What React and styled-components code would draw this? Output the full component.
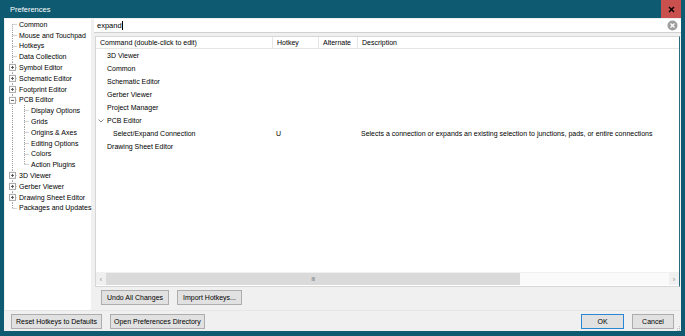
import React from 'react';
import styled, { createGlobalStyle } from 'styled-components';

const GlobalStyle = createGlobalStyle`
  html, body {
    margin: 0;
    padding: 0;
    background: #0e5a70;
  }
  body {
    font-family: 'Liberation Sans', Arial, sans-serif;
    font-size: 7px;
    color: #000;
  }
`;

const Window = styled.div`
  width: 685px;
  height: 336px;
  background: #0e5a70;
  display: flex;
  flex-direction: column;
  overflow: hidden;
`;

const TitleBar = styled.div`
  height: 18px;
  display: flex;
  align-items: center;
  padding-left: 10px;
  padding-right: 4px;
`;

const Title = styled.div`
  flex: 1;
  color: #fff;
  font-size: 7.5px;
`;

const CloseButton = styled.div`
  width: 20px;
  height: 18px;
  background: #c9504c;
  display: flex;
  align-items: center;
  justify-content: center;
`;

const Body = styled.div`
  margin: 0 4px 5px 4px;
  flex: 1;
  background: #f0f0f0;
  display: flex;
  flex-direction: column;
`;

const Main = styled.div`
  height: 292px;
  display: flex;
  padding: 1px 0 0 1px;
  box-sizing: border-box;
`;

const Tree = styled.div`
  width: 86px;
  background: #fff;
  display: flex;
  flex-direction: column;
`;

const TreeRow = styled.div`
  height: 10.8px;
  display: flex;
  align-items: center;
  white-space: nowrap;
`;

const Pane = styled.div`
  flex: 1;
  margin-left: 3px;
  display: flex;
  flex-direction: column;
`;

const Search = styled.div`
  height: 14px;
  background: #fff;
  border-bottom: 1px solid #d0d0d0;
  display: flex;
  align-items: center;
  padding: 0 3px;
  box-sizing: border-box;
`;

const SearchText = styled.div`
  flex: 1;
  font-size: 7.5px;
`;

const Caret = styled.span`
  display: inline-block;
  width: 1px;
  height: 9px;
  background: #000;
  vertical-align: middle;
`;

const Table = styled.div`
  margin: 3px 1px 0 1px;
  height: 251px;
  background: #fff;
  border: 1px solid #d6d6d6;
  border-right-color: #2a6c7e;
  box-sizing: border-box;
  display: flex;
  flex-direction: column;
`;

const cols = '177px 46px 39px 1fr';

const Header = styled.div`
  display: grid;
  grid-template-columns: ${cols};
  height: 11px;
  border-bottom: 1px solid #e5e5e5;
`;

const HeaderCell = styled.div`
  padding-left: 4px;
  display: flex;
  align-items: center;
  border-right: ${(p) => (p.last ? 'none' : '1px solid #e5e5e5')};
`;

const Rows = styled.div`
  flex: 1;
`;

const Row = styled.div`
  display: grid;
  grid-template-columns: ${cols};
  height: 13px;
  align-items: center;
  white-space: nowrap;
`;

const CommandCell = styled.div`
  display: flex;
  align-items: center;
  padding-left: ${(p) => p.indent}px;
`;

const Cell = styled.div`
  padding-left: 3px;
`;

const HScroll = styled.div`
  height: 12px;
  display: flex;
  margin-bottom: 1px;
  border-top: 1px solid #f0f0f0;
`;

const Arrow = styled.div`
  width: 10px;
  display: flex;
  align-items: center;
  justify-content: center;
  color: #8a8a8a;
  font-size: 7px;
  background: #f0f0f0;
`;

const Thumb = styled.div`
  width: 414px;
  background: #dadada;
  display: flex;
  align-items: center;
  justify-content: center;
  color: #7a7a7a;
  font-size: 6px;
  letter-spacing: -0.5px;
`;

const Track = styled.div`
  flex: 1;
  background: #fafafa;
`;

const PaneButtons = styled.div`
  display: flex;
  gap: 8px;
  padding: 3px 0 0 7px;
`;

const Button = styled.div`
  height: 15px;
  padding: 0 ${(p) => p.pad || 5}px;
  min-width: ${(p) => p.min || 0}px;
  box-sizing: border-box;
  background: #e1e1e1;
  border: 1px solid ${(p) => (p.focused ? '#2b86d6' : '#adadad')};
  display: flex;
  align-items: center;
  justify-content: center;
  white-space: nowrap;
`;

const Footer = styled.div`
  flex: 1;
  border-top: 1px solid #e6e6e6;
  display: flex;
  align-items: center;
  padding: 0 7px;
  gap: 8px;
  position: relative;
`;

const Spacer = styled.div`
  flex: 1;
`;

const Grip = styled.svg`
  position: absolute;
  right: 0;
  bottom: 0;
`;

const treeItems = [
  { label: 'Common' },
  { label: 'Mouse and Touchpad' },
  { label: 'Hotkeys' },
  { label: 'Data Collection' },
  { label: 'Symbol Editor', box: '+' },
  { label: 'Schematic Editor', box: '+' },
  { label: 'Footprint Editor', box: '+' },
  { label: 'PCB Editor', box: '-' },
  { label: 'Display Options', child: true },
  { label: 'Grids', child: true },
  { label: 'Origins & Axes', child: true },
  { label: 'Editing Options', child: true },
  { label: 'Colors', child: true },
  { label: 'Action Plugins', child: true, lastChild: true },
  { label: '3D Viewer', box: '+' },
  { label: 'Gerber Viewer', box: '+' },
  { label: 'Drawing Sheet Editor', box: '+' },
  { label: 'Packages and Updates', last: true },
];

const H = 10.8;
const M = H / 2;
const line = { stroke: '#a0a0a0', strokeWidth: 1, strokeDasharray: '1 1' };

const Guides = ({ item, first }) => {
  const w = item.child ? 26 : 14;
  return (
    <svg width={w} height={H} style={{ flex: 'none' }}>
      <line x1="7.5" x2="7.5" y1={first ? M : 0} y2={item.last ? M : H} {...line} />
      {item.child ? (
        <>
          <line x1="19.5" x2="19.5" y1="0" y2={item.lastChild ? M : H} {...line} />
          <line x1="19.5" x2="24" y1={M} y2={M} {...line} />
        </>
      ) : (
        <line x1="7.5" x2="12" y1={M} y2={M} {...line} />
      )}
      {item.box && (
        <>
          <rect x="4.5" y={M - 3} width="6" height="6" fill="#fff" stroke="#a8a8a8" />
          <line x1="6" x2="9" y1={M} y2={M} stroke="#555" />
          {item.box === '+' && <line x1="7.5" x2="7.5" y1={M - 1.5} y2={M + 1.5} stroke="#555" />}
        </>
      )}
    </svg>
  );
};

const commands = [
  { name: '3D Viewer' },
  { name: 'Common' },
  { name: 'Schematic Editor' },
  { name: 'Gerber Viewer' },
  { name: 'Project Manager' },
  { name: 'PCB Editor', open: true },
  {
    name: 'Select/Expand Connection',
    sub: true,
    hotkey: 'U',
    desc: 'Selects a connection or expands an existing selection to junctions, pads, or entire connections',
  },
  { name: 'Drawing Sheet Editor' },
];

const Chevron = () => (
  <svg width="9" height="8" style={{ flex: 'none', marginLeft: -10, marginRight: 1 }}>
    <polyline points="1.5,2.5 4,5 6.5,2.5" fill="none" stroke="#7a7a7a" strokeWidth="0.9" />
  </svg>
);

export default function App() {
  return (
    <Window>
      <GlobalStyle />
      <TitleBar>
        <Title>Preferences</Title>
        <CloseButton>
          <svg width="7" height="7">
            <path d="M1 1 L6 6 M6 1 L1 6" stroke="#000" strokeWidth="1.4" />
          </svg>
        </CloseButton>
      </TitleBar>
      <Body>
        <Main>
          <Tree>
            {treeItems.map((item, i) => (
              <TreeRow key={item.label}>
                <Guides item={item} first={i === 0} />
                {item.label}
              </TreeRow>
            ))}
          </Tree>
          <Pane>
            <Search>
              <SearchText>
                expand
                <Caret />
              </SearchText>
              <svg width="11" height="11">
                <circle cx="5.5" cy="5.5" r="5" fill="#9e9e9e" />
                <path d="M3.5 3.5 L7.5 7.5 M7.5 3.5 L3.5 7.5" stroke="#fff" strokeWidth="1.3" />
              </svg>
            </Search>
            <Table>
              <Header>
                <HeaderCell>Command (double-click to edit)</HeaderCell>
                <HeaderCell>Hotkey</HeaderCell>
                <HeaderCell>Alternate</HeaderCell>
                <HeaderCell last>Description</HeaderCell>
              </Header>
              <Rows>
                {commands.map((c) => (
                  <Row key={c.name}>
                    <CommandCell indent={c.sub ? 17 : 11}>
                      {c.open && <Chevron />}
                      {c.name}
                    </CommandCell>
                    <Cell>{c.hotkey}</Cell>
                    <Cell />
                    <Cell>{c.desc}</Cell>
                  </Row>
                ))}
              </Rows>
              <HScroll>
                <Arrow>‹</Arrow>
                <Thumb>III</Thumb>
                <Track />
                <Arrow>›</Arrow>
              </HScroll>
            </Table>
            <PaneButtons>
              <Button>Undo All Changes</Button>
              <Button>Import Hotkeys...</Button>
            </PaneButtons>
          </Pane>
        </Main>
        <Footer>
          <Button pad={4}>Reset Hotkeys to Defaults</Button>
          <Button pad={3}>Open Preferences Directory</Button>
          <Spacer />
          <Button focused min={43}>OK</Button>
          <Button min={42}>Cancel</Button>
          <Grip width="5" height="5">
            <rect x="3" y="0" width="1" height="1" fill="#bbb" />
            <rect x="1" y="2" width="1" height="1" fill="#bbb" />
            <rect x="3" y="2" width="1" height="1" fill="#bbb" />
            <rect x="1" y="4" width="1" height="1" fill="#bbb" />
            <rect x="3" y="4" width="1" height="1" fill="#bbb" />
          </Grip>
        </Footer>
      </Body>
    </Window>
  );
}
